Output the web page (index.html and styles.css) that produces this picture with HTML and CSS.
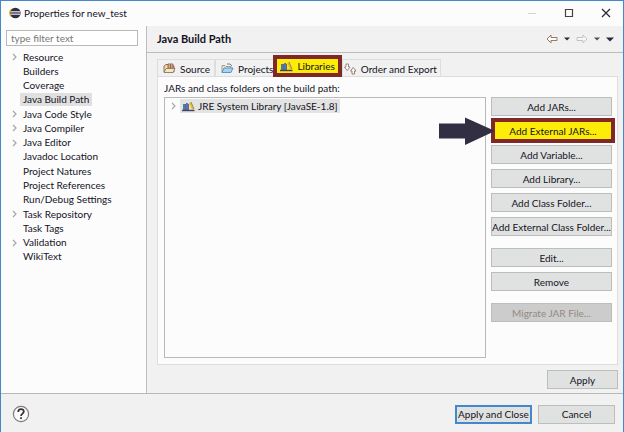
FILE: index.html
```html
<!DOCTYPE html>
<html lang="en">
<head>
<meta charset="utf-8">
<title>Properties for new_test</title>
<link rel="stylesheet" href="styles.css">
</head>
<body>
<svg class="defs" aria-hidden="true">
  <symbol id="chevron" viewBox="0 0 6 8"><path d="M1 1l3 3-3 3" fill="none" stroke="#a6a6a6" stroke-width="1.2"/></symbol>
  <symbol id="books" viewBox="0 0 13 11">
    <path d="M1 3h2v6H1zM4 2h2v7H4z" fill="#3f7fc0"/><path d="M3 3h1v6H3zM6 3h1v6H6z" fill="#8b5a58"/>
    <path d="M7 2l2-1 3 7-2 1z" fill="#e2c52c"/><path d="M9 1l3 7" stroke="#777" stroke-width=".8"/>
    <path d="M0 9.500h12.500" stroke="#45415c" stroke-width="1.400"/>
  </symbol>
</svg>
<div class="window">
  <header class="titlebar">
    <svg class="logo" viewBox="0 0 12 12" aria-hidden="true"><circle cx="5" cy="6" r="5" fill="#efb91f"/><circle cx="6.500" cy="6" r="5.200" fill="#2d2d45"/><path d="M1.500 4.500h10M1.500 6h10M1.500 7.500h10" stroke="#d3d3dc" stroke-width=".9"/></svg>
    <h1>Properties for new_test</h1>
    <button class="win" aria-label="Minimize"><svg viewBox="0 0 10 10"><path d="M1 5.500h8" stroke="#d4d4d4"/></svg></button>
    <button class="win" aria-label="Maximize"><svg viewBox="0 0 10 10"><path d="M1.500 1.500h7v7h-7z" fill="none" stroke="#4b3f42" stroke-width="1.200"/></svg></button>
    <button class="win" aria-label="Close"><svg viewBox="0 0 10 10"><path d="M1 1l8 8M9 1L1 9" stroke="#26263a" stroke-width="1.200"/></svg></button>
  </header>
  <div class="main">
    <nav class="side">
      <input class="filter" type="text" placeholder="type filter text" aria-label="Filter">
      <ul class="tree">
        <li><svg><use href="#chevron"/></svg><span>Resource</span></li>
        <li><span>Builders</span></li>
        <li><span>Coverage</span></li>
        <li><span class="selected">Java Build Path</span></li>
        <li><svg><use href="#chevron"/></svg><span>Java Code Style</span></li>
        <li><svg><use href="#chevron"/></svg><span>Java Compiler</span></li>
        <li><svg><use href="#chevron"/></svg><span>Java Editor</span></li>
        <li><span>Javadoc Location</span></li>
        <li><span>Project Natures</span></li>
        <li><span>Project References</span></li>
        <li><span>Run/Debug Settings</span></li>
        <li><svg><use href="#chevron"/></svg><span>Task Repository</span></li>
        <li><span>Task Tags</span></li>
        <li><svg><use href="#chevron"/></svg><span>Validation</span></li>
        <li><span>WikiText</span></li>
      </ul>
    </nav>
    <section class="page">
      <div class="heading">
        <h2>Java Build Path</h2>
        <button class="tool" aria-label="Back"><svg width="12" height="10" viewBox="0 0 12 10"><path d="M1 5l4-4v2.500h6v3H5V9z" fill="#fffdf4" stroke="#98796a"/></svg></button>
        <button class="tool" aria-label="Back history"><svg width="6" height="4" viewBox="0 0 6 4"><path d="M0 .5h6L3 3.500z" fill="#292940"/></svg></button>
        <button class="tool" aria-label="Forward"><svg width="12" height="10" viewBox="0 0 12 10"><path d="M11 5L7 1v2.500H1v3h6V9z" fill="#f8f8f8" stroke="#c2c2c2"/></svg></button>
        <button class="tool" aria-label="Forward history"><svg width="6" height="4" viewBox="0 0 6 4"><path d="M0 .5h6L3 3.500z" fill="#5b4a4a"/></svg></button>
        <button class="tool" aria-label="Menu"><svg width="8" height="5" viewBox="0 0 8 5"><path d="M0 .5h8L4 4.500z" fill="#292940"/></svg></button>
      </div>
      <div class="content">
        <div class="tabs" role="tablist">
          <button class="tab" role="tab"><svg width="13" height="11" viewBox="0 0 13 11"><path d="M1 9V3l2-1.500h3L7 3h4v6z" fill="#f3dc9c" stroke="#8d7465"/><path d="M5 1h5v4H5z" fill="#f1d7b0" stroke="#8b4a3c" stroke-width=".8"/><path d="M7.500 1v4M5 3h5" stroke="#8b4a3c" stroke-width=".7"/><path d="M1 9.500l2-4h9l-2 4z" fill="#f8e8b8" stroke="#7e6d68" stroke-width=".8"/></svg>Source</button>
          <button class="tab" role="tab"><svg width="13" height="11" viewBox="0 0 13 11"><path d="M1 9.500V2.500h3l1 1h5v2" fill="#f5e4b2" stroke="#90a0a8"/><path d="M6 1h3l2 2" fill="none" stroke="#8d7465"/><path d="M1 9.500l2-4.500h9l-2 4.500z" fill="#a9d3f2" stroke="#4d8fc6" stroke-width=".9"/></svg>Projects</button>
          <button class="tab active" role="tab" aria-selected="true"><svg width="13" height="11"><use href="#books"/></svg>Libraries</button>
          <button class="tab" role="tab"><svg width="13" height="12" viewBox="0 0 13 12"><path d="M2 1h2.500v3H6L3.200 7.500.5 4H2z" fill="#fff" stroke="#8c7c75" stroke-width=".9"/><path d="M8 11h2.500V8H12L9.200 4.500 6.500 8H8z" fill="#fff" stroke="#8c6f61" stroke-width=".9"/></svg>Order and Export</button>
        </div>
        <div class="panel">
          <p class="caption">JARs and class folders on the build path:</p>
          <div class="columns">
            <ul class="list">
              <li><svg class="twist"><use href="#chevron"/></svg><span class="entry"><svg width="13" height="11"><use href="#books"/></svg>JRE System Library [JavaSE-1.8]</span></li>
            </ul>
            <div class="actions">
              <button class="btn">Add JARs...</button>
              <div class="marked">
                <svg class="pointer" viewBox="0 0 56 30" aria-hidden="true"><path d="M0 7.500h26V1.500L56 15 26 29V22.500H0z" fill="#322f42"/></svg>
                <button class="btn">Add External JARs...</button>
              </div>
              <button class="btn">Add Variable...</button>
              <button class="btn">Add Library...</button>
              <button class="btn">Add Class Folder...</button>
              <button class="btn">Add External Class Folder...</button>
              <button class="btn apart">Edit...</button>
              <button class="btn">Remove</button>
              <button class="btn apart" disabled>Migrate JAR File...</button>
            </div>
          </div>
        </div>
        <button class="btn apply">Apply</button>
      </div>
    </section>
  </div>
  <footer class="footer">
    <button class="help" aria-label="Help"><svg viewBox="0 0 18 18"><circle cx="9" cy="9" r="7.600" fill="#fafafa" stroke="#83797a" stroke-width="1.200"/><path d="M6.200 7c0-3.800 5.800-3.600 5.600-.4C11.700 8.500 9 8.700 9 11" fill="none" stroke="#34303d" stroke-width="1.700"/><path d="M8.100 12.300h1.800v1.800H8.100z" fill="#34303d"/></svg></button>
    <button class="btn primary">Apply and Close</button>
    <button class="btn">Cancel</button>
  </footer>
</div>
</body>
</html>
```
FILE: styles.css
```css
* { box-sizing: border-box; }
body {
  margin: 0;
  font: 400 10px/14px Lato, "Open Sans", sans-serif;
  color: #14121e;
}
button, input { font: inherit; color: inherit; }
button { padding: 0; border: 0; background: none; }
h1, h2, p, ul { margin: 0; padding: 0; font: inherit; }
ul { list-style: none; }
svg { flex: none; display: block; }
.defs { position: absolute; width: 0; height: 0; }

.window {
  min-height: 100vh;
  display: flex;
  flex-direction: column;
  border: 1px solid #4488cc;
  border-bottom: 0;
  background: #f0f1f0;
}
.titlebar {
  display: flex;
  align-items: center;
  height: 25px;
  padding: 0 12px 2px 8px;
  background: #fcfcfc;
}
.titlebar h1 { flex: 1; margin-left: 3px; }
.logo { width: 12px; height: 12px; }
.win { width: 10px; margin-left: 27px; }
.win svg { width: 10px; height: 10px; }

.main { flex: 1; display: flex; border-bottom: 1px solid #b8b8b8; }
.side {
  width: 146px;
  padding: 4px 8px 0 5px;
  background: #fcfcfc;
  border-right: 1px solid #bcbcbc;
}
.filter {
  display: block;
  width: 100%;
  height: 16px;
  padding: 0 4px;
  border: 1px solid #b9b9b9;
  background: #fff;
}
.filter::placeholder { color: #777; opacity: 1; }
.tree {
  display: grid;
  grid-auto-rows: 1fr;
  height: 214px;
  margin-top: 4px;
}
.tree li { position: relative; display: flex; align-items: center; padding-left: 14px; }
.tree svg { position: absolute; left: 6px; width: 6px; height: 8px; }
.tree span { padding: 0 3px; line-height: 13px; white-space: nowrap; }
.tree .selected { background: #e0e0e0; }

.page { flex: 1; min-width: 0; display: flex; flex-direction: column; }
.heading {
  display: flex;
  align-items: center;
  gap: 6px;
  height: 27px;
  padding: 0 9px 0 10px;
  border-bottom: 1px solid #bcbcbc;
}
.heading h2 { flex: 1; font-size: 11px; font-weight: 700; }

.content { flex: 1; display: flex; flex-direction: column; padding: 2px 5px 4px 10px; }
.tabs { display: flex; align-items: flex-end; height: 22px; margin-bottom: -1px; }
.tab {
  display: flex;
  align-items: center;
  gap: 4px;
  height: 18px;
  padding: 0 4px 0 5px;
  border: 1px solid #dcdddc;
  border-bottom: 0;
  white-space: nowrap;
}
.tab.active {
  z-index: 1;
  height: 22px;
  margin-left: -5px;
  padding: 0 3px;
  border: 4px solid #802828;
  background: #fcec08;
}
.tab:last-child { padding: 0 3px 0 1px; }
.panel {
  flex: 1;
  display: flex;
  flex-direction: column;
  padding: 4px 5px 6px 6px;
  border: 1px solid #dcdddc;
  background: #fcfcfc;
}
.caption { margin-bottom: 2px; }
.columns { flex: 1; display: flex; gap: 5px; }
.list { flex: 1; padding: 1px 6px; border: 1px solid #b9b9b9; background: #fcfcfc; }
.list li { display: flex; align-items: center; gap: 3px; }
.twist { width: 6px; height: 8px; }
.entry { display: flex; align-items: center; gap: 3px; padding: 0 2px; background: #e2e3e2; }

.btn {
  height: 19px;
  border: 1px solid #bcbdbc;
  background: #e0e2e1;
  line-height: 16px;
  white-space: nowrap;
}
.btn:disabled { background: #cbcccb; border-color: #bcbdbc; color: #958a83; }
.actions { display: flex; flex-direction: column; gap: 5px; width: 121px; }
.apart { margin-top: 7px; }
.marked {
  position: relative;
  display: flex;
  margin: -3px -3px -3px 0;
  border: 4px solid #802828;
}
.marked .btn { flex: 1; height: 17px; border: 0; background: #fcec08; }
.pointer { position: absolute; right: 100%; top: -6px; width: 56px; height: 30px; }
.apply { align-self: flex-end; width: 71px; margin-top: 5px; }

.footer {
  display: flex;
  align-items: center;
  gap: 6px;
  height: 38px;
  padding: 2px 8px 0 11px;
}
.help { margin-right: auto; }
.help svg { width: 18px; height: 18px; }
.footer .btn { width: 77px; }
.footer .primary { border: 2px solid #4488cc; line-height: 14px; }
```
